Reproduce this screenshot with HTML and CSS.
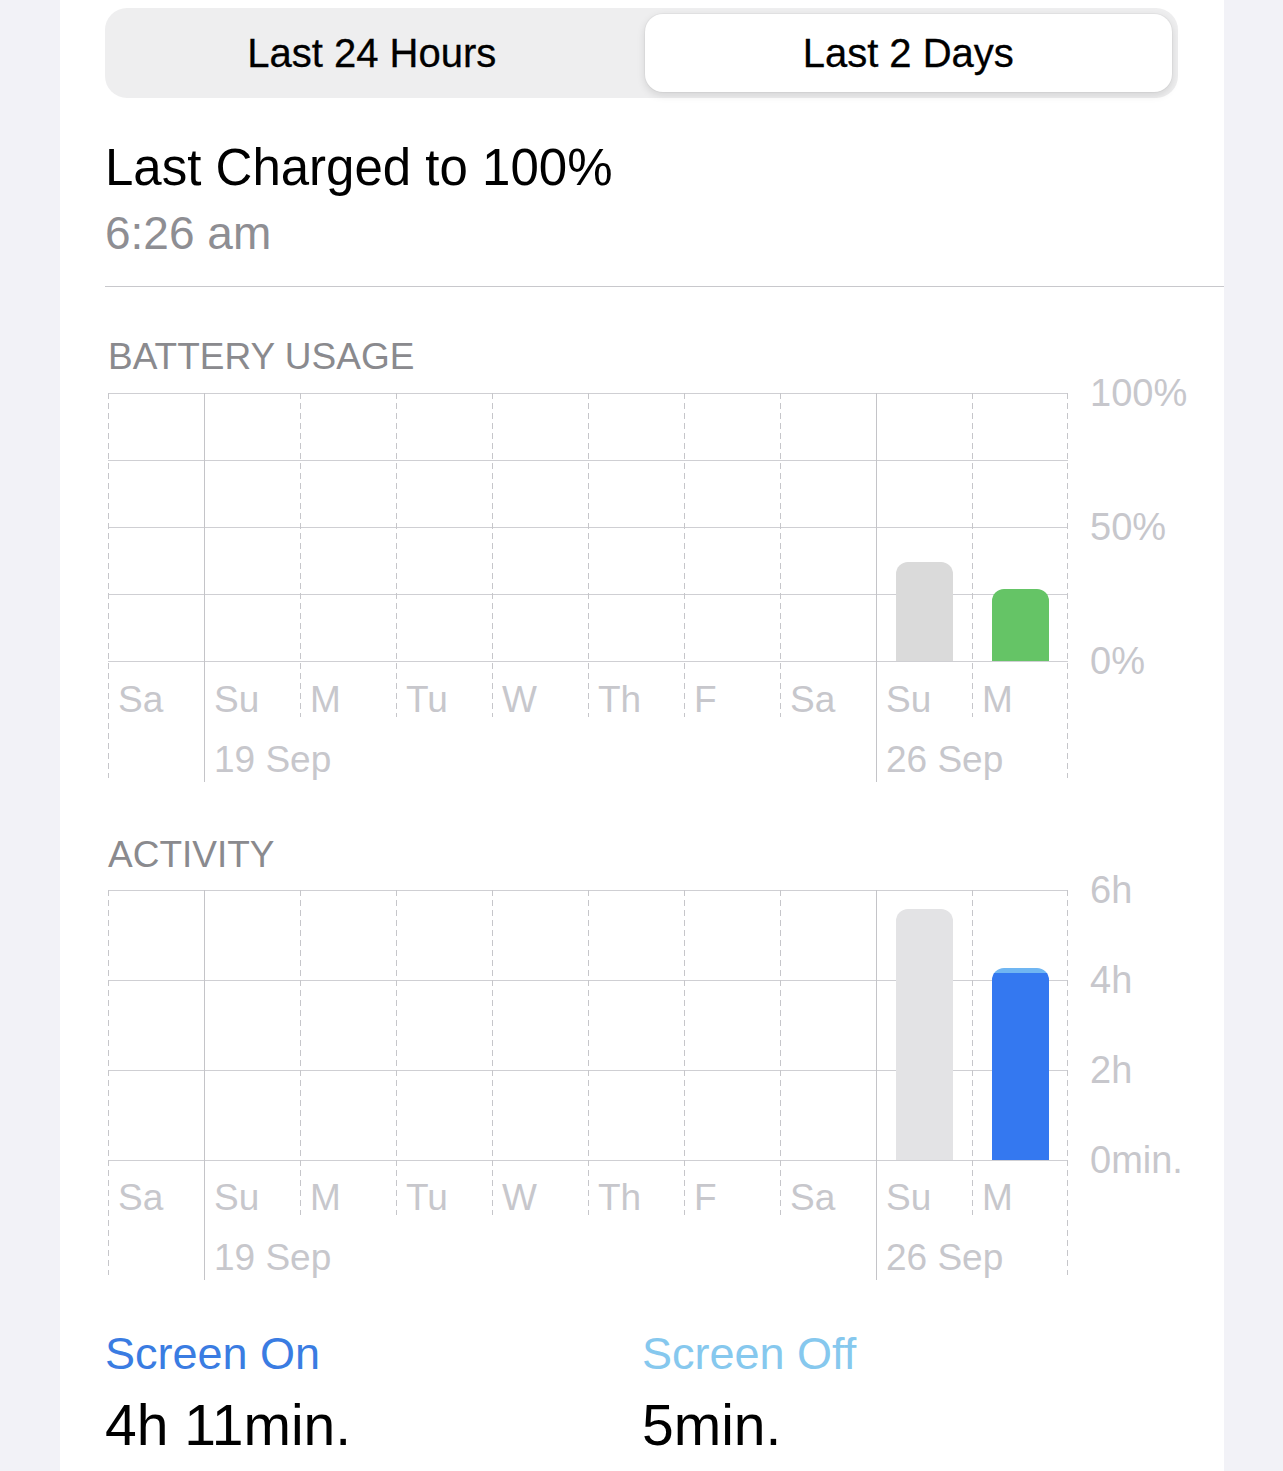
FILE: index.html
```html
<!DOCTYPE html>
<html lang="en">
<head>
    <meta charset="UTF-8">
    <meta name="viewport" content="width=device-width, initial-scale=1.0">
    <title>Battery</title>
    <link rel="stylesheet" href="styles.css">
</head>
<body>

<div class="card">
    <!-- Range switch -->
    <div class="segments">
        <div class="segment">Last 24 Hours</div>
        <div class="segment active">Last 2 Days</div>
    </div>

    <div class="charged">
        <p class="charged-title">Last Charged to 100%</p>
        <p class="charged-time">6:26 am</p>
    </div>

    <hr class="divider">

    <!-- Battery usage chart -->
    <h2 class="section-title">BATTERY USAGE</h2>
    <div class="chart usage">
        <div class="days">
            <div class="day edge"><div class="slot"></div><span class="day-label">Sa</span></div>
            <div class="day sunday"><div class="slot"></div><span class="day-label">Su</span><span class="day-label">19 Sep</span></div>
            <div class="day"><div class="slot"></div><span class="day-label">M</span></div>
            <div class="day"><div class="slot"></div><span class="day-label">Tu</span></div>
            <div class="day"><div class="slot"></div><span class="day-label">W</span></div>
            <div class="day"><div class="slot"></div><span class="day-label">Th</span></div>
            <div class="day"><div class="slot"></div><span class="day-label">F</span></div>
            <div class="day"><div class="slot"></div><span class="day-label">Sa</span></div>
            <div class="day sunday">
                <div class="slot"><div class="bar gray" style="height: 37%;"></div></div>
                <span class="day-label">Su</span><span class="day-label">26 Sep</span>
            </div>
            <div class="day last">
                <div class="slot"><div class="bar green" style="height: 27%;"></div></div>
                <span class="day-label">M</span>
            </div>
        </div>
        <div class="axis">
            <span>100%</span>
            <span>50%</span>
            <span>0%</span>
        </div>
    </div>

    <!-- Activity chart -->
    <h2 class="section-title activity-title">ACTIVITY</h2>
    <div class="chart activity">
        <div class="days">
            <div class="day edge"><div class="slot"></div><span class="day-label">Sa</span></div>
            <div class="day sunday"><div class="slot"></div><span class="day-label">Su</span><span class="day-label">19 Sep</span></div>
            <div class="day"><div class="slot"></div><span class="day-label">M</span></div>
            <div class="day"><div class="slot"></div><span class="day-label">Tu</span></div>
            <div class="day"><div class="slot"></div><span class="day-label">W</span></div>
            <div class="day"><div class="slot"></div><span class="day-label">Th</span></div>
            <div class="day"><div class="slot"></div><span class="day-label">F</span></div>
            <div class="day"><div class="slot"></div><span class="day-label">Sa</span></div>
            <div class="day sunday">
                <div class="slot"><div class="bar light-gray" style="height: 93%;"></div></div>
                <span class="day-label">Su</span><span class="day-label">26 Sep</span>
            </div>
            <div class="day last">
                <div class="slot">
                    <div class="bar stacked" style="height: 71%;">
                        <div class="part-off" style="height: 5px;"></div>
                        <div class="part-on"></div>
                    </div>
                </div>
                <span class="day-label">M</span>
            </div>
        </div>
        <div class="axis">
            <span>6h</span>
            <span>4h</span>
            <span>2h</span>
            <span>0min.</span>
        </div>
    </div>

    <!-- Totals -->
    <div class="totals">
        <div class="total">
            <p class="total-label on">Screen On</p>
            <p class="total-value">4h 11min.</p>
        </div>
        <div class="total">
            <p class="total-label off">Screen Off</p>
            <p class="total-value">5min.</p>
        </div>
    </div>
</div>

</body>
</html>
```

FILE: styles.css
```css
body {
    font-family: "Liberation Sans", Arial, sans-serif;
    margin: 0;
    padding: 0;
    background-color: #f2f2f7;
    color: #000;
}
p {
    margin: 0;
}
.card {
    margin: 0 59px 0 60px;
    min-height: 1471px;
    background-color: #fff;
    padding: 8px 0 0 45px;
    box-sizing: border-box;
}

/* range switch */
.segments {
    display: grid;
    grid-template-columns: 1fr 1fr;
    gap: 6px;
    height: 90px;
    margin-right: 46px;
    padding: 6px;
    box-sizing: border-box;
    background-color: #eeeeef;
    border-radius: 22px;
}
.segment {
    display: flex;
    align-items: center;
    justify-content: center;
    font-size: 40px;
    -webkit-text-stroke: 0.3px #000;
    border-radius: 18px;
}
.segment:first-child {
    padding-right: 6px;
}
.segment.active {
    background-color: #fff;
    box-shadow: 0 3px 8px rgba(0, 0, 0, 0.12), 0 0 0 1px rgba(0, 0, 0, 0.03);
}

.charged {
    margin-top: 40px;
}
.charged-title {
    font-size: 51px;
    line-height: 60px;
}
.charged-time {
    margin-top: 7px;
    font-size: 46px;
    line-height: 56px;
    color: #8e8e93;
}
.divider {
    margin: 25px 0 0 0;
    border: none;
    border-top: 1px solid #c8c8cc;
}

.section-title {
    margin: 48px 0 14px 3px;
    font-size: 37px;
    line-height: 44px;
    font-weight: normal;
    color: #8a8a8e;
}
.activity-title {
    margin-top: 51px;
    margin-bottom: 13px;
}

/* charts */
.chart {
    display: flex;
    align-items: flex-start;
    margin-left: 3px;
}
.usage {
    --plot: 268px;
    --row: 67px;
    --tick: 324px;
    --edge: 385px;
}
.activity {
    --plot: 270px;
    --row: 90px;
    --tick: 325px;
    --edge: 385px;
}
.days {
    display: grid;
    grid-template-columns: repeat(10, 96px);
    background-image: repeating-linear-gradient(to bottom, #cfcfd3 0 1px, transparent 1px var(--row));
    background-size: 960px calc(var(--plot) + 1px);
    background-repeat: no-repeat;
}
.day {
    display: flex;
    flex-direction: column;
    background-image: repeating-linear-gradient(to bottom, #c6c6ca 0 6px, transparent 6px 10px);
    background-size: 1px var(--tick);
    background-position: left top;
    background-repeat: no-repeat;
}
.day.edge {
    background-size: 1px var(--edge);
}
.day.sunday {
    background-image: linear-gradient(#c4c4c8, #c4c4c8);
    background-size: 1px 100%;
}
.day.last {
    background-image: repeating-linear-gradient(to bottom, #c6c6ca 0 6px, transparent 6px 10px),
                      repeating-linear-gradient(to bottom, #c6c6ca 0 6px, transparent 6px 10px);
    background-size: 1px var(--tick), 1px var(--edge);
    background-position: left top, right top;
}
.slot {
    height: var(--plot);
    display: flex;
    align-items: flex-end;
    justify-content: center;
}
.bar {
    width: 57px;
    border-radius: 12px 12px 0 0;
}
.bar.gray {
    background-color: #dadada;
}
.bar.light-gray {
    background-color: #e3e3e5;
}
.bar.green {
    background-color: #65c466;
}
.bar.stacked {
    display: flex;
    flex-direction: column;
    overflow: hidden;
}
.part-off {
    background-color: #70b6f2;
}
.part-on {
    flex: 1;
    background-color: #3478f0;
}
.day-label {
    margin-top: 16px;
    padding-left: 10px;
    font-size: 37px;
    line-height: 44px;
    color: #c7c7cc;
    white-space: nowrap;
}
.usage .day-label:nth-child(2) {
    margin-top: 17px;
}
.axis {
    display: flex;
    flex-direction: column;
    justify-content: space-between;
    height: calc(var(--plot) + 44px);
    margin: -22px 0 0 22px;
    font-size: 38px;
    line-height: 44px;
    color: #c7c7cc;
}

/* totals */
.totals {
    display: grid;
    grid-template-columns: 537px auto;
    margin-top: 48px;
}
.total-label {
    font-size: 45px;
    line-height: 52px;
}
.total-label.on {
    color: #3a7ce2;
}
.total-label.off {
    color: #86c8ee;
}
.total-value {
    margin-top: 12px;
    font-size: 57px;
    line-height: 66px;
}
```
